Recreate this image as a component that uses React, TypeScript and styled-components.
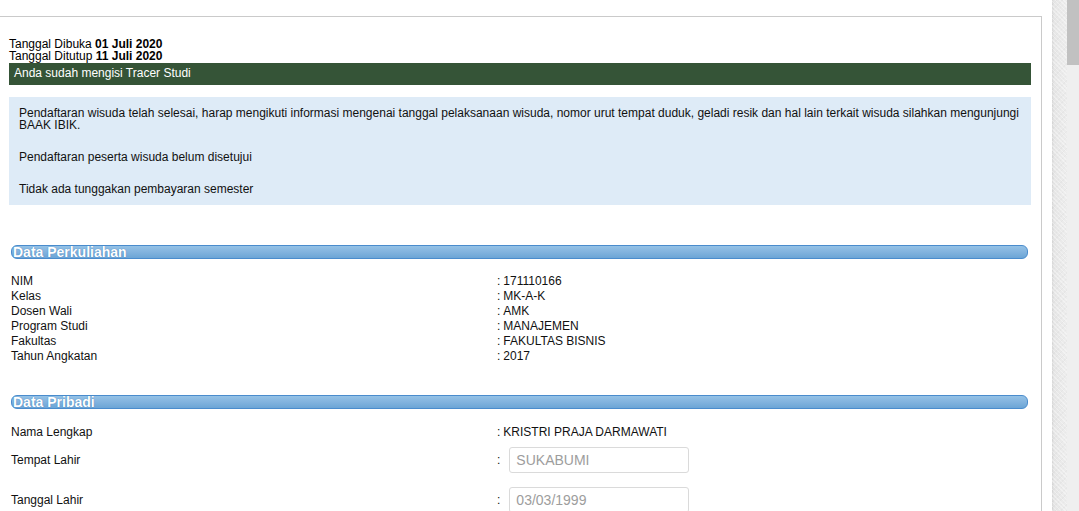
import React from "react";
import styled, { createGlobalStyle } from "styled-components";

const GlobalStyle = createGlobalStyle`
  html, body { margin: 0; padding: 0; background: #fff; overflow: hidden; }
  body {
    font-family: "Liberation Sans", Arial, sans-serif;
    font-size: 12px;
    color: #111;
  }
  * { box-sizing: border-box; }
`;

const Page = styled.div`
  display: flex;
  width: 1079px;
  height: 511px;
  overflow: hidden;
`;

const Panel = styled.main`
  flex: none;
  width: 1042px;
  margin-top: 16px;
  border-top: 1px solid #cacaca;
  border-right: 1px solid #cacaca;
  padding: 21px 10px 0 9px;
`;

const Gutter = styled.div`
  flex: none;
  width: 10px;
`;

const Texture = styled.div`
  flex: none;
  width: 15px;
  background:
    repeating-linear-gradient(45deg, rgba(255,255,255,0.35) 0 1px, transparent 1px 3px),
    repeating-linear-gradient(-45deg, rgba(0,0,0,0.025) 0 1px, transparent 1px 4px),
    linear-gradient(to right, #d6d6d6 0, #e6e6e6 2px, #ededed 100%);
`;

const ScrollTrack = styled.div`
  flex: none;
  width: 12px;
  background: #efefef;
  display: flex;
  flex-direction: column;
`;

const ScrollThumb = styled.div`
  height: 65px;
  background: #c1c1c1;
`;

const DateLine = styled.div`
  line-height: 12px;
  color: #000;
  b { font-weight: bold; }
`;

const Notice = styled.div`
  margin-top: 1px;
  background: #355437;
  color: #fff;
  padding: 3px 5px 5px;
  line-height: 14px;
`;

const InfoBox = styled.div`
  margin-top: 12px;
  background: #deebf7;
  padding: 10px;
  line-height: 12px;
  color: #111;
`;

const InfoPara = styled.p`
  margin: 0;
  & + & { margin-top: 20px; }
`;

const SectionHeader = styled.h3<{ $mt: number }>`
  margin: ${(p) => p.$mt}px 3px 0 2px;
  height: 14px;
  border: 1px solid #4a8ccd;
  border-radius: 6px;
  background: linear-gradient(to bottom, #94c2e6 0%, #82b3de 50%, #6ca5d6 100%);
  color: #fff;
  font-size: 14px;
  font-weight: bold;
  line-height: 12px;
  padding: 0 1px;
  white-space: nowrap;
  text-shadow: 0 0 1px #2f6fae;
`;

const Fields = styled.div<{ $mt: number }>`
  margin: ${(p) => p.$mt}px 2px 0;
  display: flex;
  flex-direction: column;
`;

const FieldRow = styled.div<{ $lh?: number }>`
  display: grid;
  grid-template-columns: 486px 1fr;
  align-items: center;
  line-height: ${(p) => p.$lh ?? 15}px;
`;

const Label = styled.div`
  color: #111;
`;

const Value = styled.div`
  display: flex;
  align-items: center;
  color: #111;
`;

const Colon = styled.span<{ $gap: number }>`
  margin-right: ${(p) => p.$gap}px;
`;

const FieldInput = styled.input`
  width: 180px;
  height: 26px;
  margin: 7px 0;
  border: 1px solid #dadada;
  border-radius: 3px;
  padding: 0 6px;
  font-family: "Liberation Sans", Arial, sans-serif;
  font-size: 14px;
  color: #9d9d9d;
  background: #fff;
  outline: none;
`;

const kuliah = [
  ["NIM", "171110166"],
  ["Kelas", "MK-A-K"],
  ["Dosen Wali", "AMK"],
  ["Program Studi", "MANAJEMEN"],
  ["Fakultas", "FAKULTAS BISNIS"],
  ["Tahun Angkatan", "2017"],
];

export default function App() {
  return (
    <>
      <GlobalStyle />
      <Page>
        <Panel>
          <DateLine>
            Tanggal Dibuka <b>01 Juli 2020</b>
          </DateLine>
          <DateLine>
            Tanggal Ditutup <b>11 Juli 2020</b>
          </DateLine>
          <Notice>Anda sudah mengisi Tracer Studi</Notice>
          <InfoBox>
            <InfoPara>
              Pendaftaran wisuda telah selesai, harap mengikuti informasi mengenai tanggal pelaksanaan wisuda, nomor urut tempat duduk, geladi resik dan hal lain terkait wisuda silahkan mengunjungi BAAK IBIK.
            </InfoPara>
            <InfoPara>Pendaftaran peserta wisuda belum disetujui</InfoPara>
            <InfoPara>Tidak ada tunggakan pembayaran semester</InfoPara>
          </InfoBox>

          <SectionHeader $mt={40}>Data Perkuliahan</SectionHeader>
          <Fields $mt={15}>
            {kuliah.map(([k, v]) => (
              <FieldRow key={k}>
                <Label>{k}</Label>
                <Value>
                  <Colon $gap={3}>:</Colon>
                  {v}
                </Value>
              </FieldRow>
            ))}
          </Fields>

          <SectionHeader $mt={31}>Data Pribadi</SectionHeader>
          <Fields $mt={15}>
            <FieldRow $lh={16}>
              <Label>Nama Lengkap</Label>
              <Value>
                <Colon $gap={3}>:</Colon>
                KRISTRI PRAJA DARMAWATI
              </Value>
            </FieldRow>
            <FieldRow>
              <Label>Tempat Lahir</Label>
              <Value>
                <Colon $gap={9}>:</Colon>
                <FieldInput readOnly value="SUKABUMI" />
              </Value>
            </FieldRow>
            <FieldRow>
              <Label>Tanggal Lahir</Label>
              <Value>
                <Colon $gap={9}>:</Colon>
                <FieldInput readOnly value="03/03/1999" />
              </Value>
            </FieldRow>
          </Fields>
        </Panel>
        <Gutter />
        <Texture />
        <ScrollTrack>
          <ScrollThumb />
        </ScrollTrack>
      </Page>
    </>
  );
}
